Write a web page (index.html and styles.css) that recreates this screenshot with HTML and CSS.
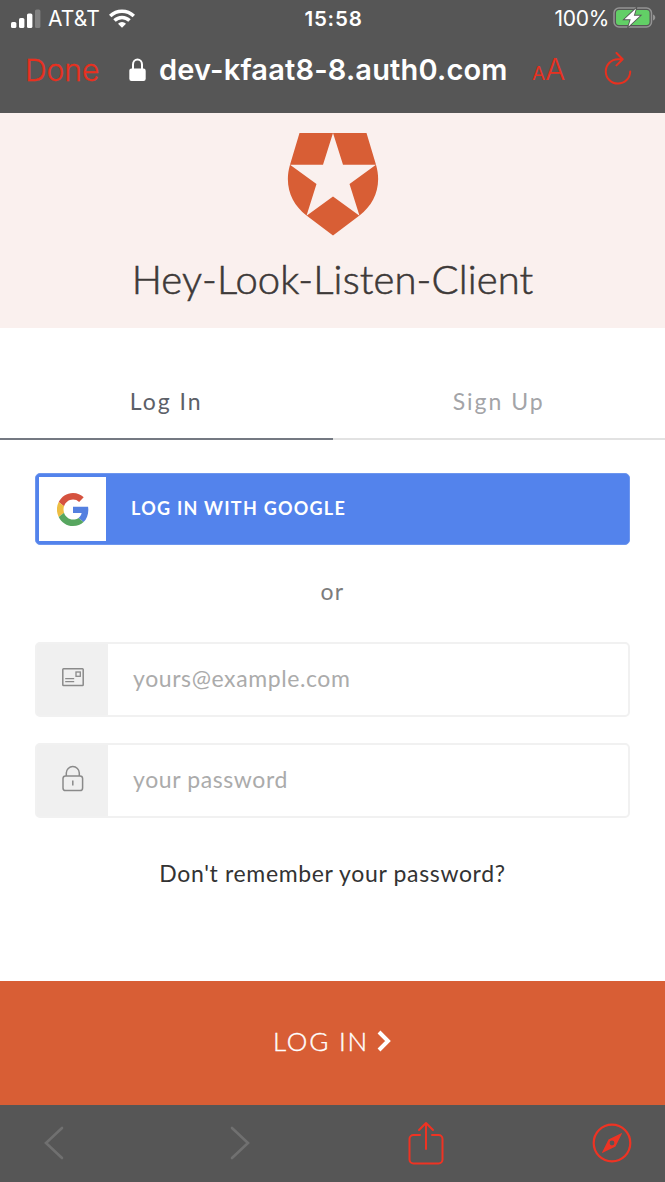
FILE: index.html
```
<!DOCTYPE html>
<html lang="en">
<head>
<meta charset="utf-8">
<title>Hey-Look-Listen-Client</title>
<link rel="stylesheet" href="styles.css">
</head>
<body>
<div class="screen">
  <div class="chrome">
    <div class="status">
      <div class="status-left">
        <svg class="signal" width="30" height="20" viewBox="0 0 30 20"><g fill="#fff"><rect x="0" y="13" width="5.4" height="6" rx="1.6"/><rect x="8" y="9" width="5.4" height="10" rx="1.6"/><rect x="16" y="4.500" width="5.400" height="14.500" rx="1.600"/><rect x="24" y="0.500" width="5.400" height="18.500" rx="1.600" opacity=".25"/></g></svg>
        <span class="carrier">AT&amp;T</span>
        <svg class="wifi" width="26" height="19" viewBox="0 0 26 19"><g fill="none" stroke="#fff" stroke-width="3.500"><path d="M1.200 7a17 17 0 0 1 23.600 0"/><path d="M5.500 11.500a10.800 10.800 0 0 1 15 0"/></g><path fill="#fff" d="M13 18.700l-4-4a5.800 5.800 0 0 1 8 0z"/></svg>
      </div>
      <span class="clock">15:58</span>
      <div class="status-right">
        <span class="percent">100%</span>
        <svg class="battery" width="43" height="22" viewBox="0 0 43 22"><rect x="1" y="1" width="37.500" height="19" rx="5" fill="none" stroke="#949494" stroke-width="1.500"/><rect x="3" y="3" width="33.500" height="15" rx="3" fill="#62cf66"/><path d="M40 7.500c3 1 3 5 0 6z" fill="#949494"/><path d="M23 1.500L11.500 12.300h6.200l-2.200 7.200L27 8.700h-6.200z" fill="#fff" stroke="#565656" stroke-width="1.800" paint-order="stroke"/></svg>
      </div>
    </div>
    <div class="address">
      <span class="done">Done</span>
      <svg class="padlock" width="17" height="24" viewBox="0 0 17 24"><path d="M4 11V6.500a4.500 5 0 0 1 9 0V11" fill="none" stroke="#fff" stroke-width="2"/><rect x="0.300" y="10.500" width="16.400" height="12.500" rx="2.200" fill="#fff"/></svg>
      <span class="url">dev-kfaat8-8.auth0.com</span>
      <span class="text-size"><span class="small-a">A</span><span class="big-a">A</span></span>
      <svg class="reload" width="30" height="34" viewBox="0 0 30 34"><path d="M19.500 7.200H15A12.200 12.200 0 1 0 27.200 19.500M13.500 1l6.200 6.200-6.200 6.200" fill="none" stroke="#e8301f" stroke-width="2" stroke-linecap="round" stroke-linejoin="round"/></svg>
    </div>
  </div>

  <header class="brand">
    <svg class="logo" width="92" height="104" viewBox="0 0 92 104"><path fill="#d85e35" d="M12.500 0H79.500L89 31.800C95 52 88 71 72.500 82.500L46 102.500 19.500 82.500C4 71-3 52 3 31.800z"/><path fill="#faf0ee" d="M46 0L56 31.800H89L62.500 51 72.500 82.800 46 63.500 19.500 82.800 29.500 51 3 31.800H36z"/></svg>
    <h1 class="title">Hey-Look-Listen-Client</h1>
  </header>

  <nav class="tabs">
    <span class="tab active">Log In</span>
    <span class="tab">Sign Up</span>
  </nav>

  <main class="form">
    <div class="google">
      <div class="google-icon"><svg width="32" height="33" viewBox="0 0 48 48" preserveAspectRatio="none"><path fill="#d5523f" d="M24 9.500c3.540 0 6.710 1.220 9.210 3.600l6.850-6.850C35.900 2.380 30.470 0 24 0 14.620 0 6.510 5.380 2.560 13.220l7.980 6.190C12.430 13.720 17.740 9.500 24 9.500z"/><path fill="#5480e0" d="M46.980 24.550c0-1.570-.15-3.090-.38-4.550H24v9.020h12.940c-.58 2.960-2.260 5.480-4.780 7.180l7.730 6c4.510-4.180 7.090-10.360 7.090-17.650z"/><path fill="#edbd42" d="M10.530 28.590A14.500 14.500 0 0 1 10.530 19.410l-7.980-6.190a24 24 0 0 0 0 21.560z"/><path fill="#57a660" d="M24 48c6.480 0 11.930-2.130 15.890-5.810l-7.730-6c-2.150 1.450-4.920 2.300-8.160 2.300-6.260 0-11.570-4.220-13.470-9.910l-7.980 6.190C6.510 42.620 14.620 48 24 48z"/></svg></div>
      <span class="google-label">LOG IN WITH GOOGLE</span>
    </div>
    <p class="or">or</p>
    <div class="field">
      <div class="field-icon"><svg class="mail" width="22" height="19" viewBox="0 0 22 19" fill="none" stroke="#8a8a8a"><rect x=".8" y=".8" width="20.400" height="16.800" rx=".8" stroke-width="1.500"/><rect x="14" y="4" width="4.300" height="4.300" stroke-width="1.300"/><path d="M3.200 10.700h9M3.200 13.700h9" stroke-width="1.300"/></svg></div>
      <span class="placeholder email">yours@example.com</span>
    </div>
    <div class="field">
      <div class="field-icon"><svg class="lock" width="22" height="27" viewBox="0 0 22 27" fill="none" stroke="#8a8a8a" stroke-width="1.500"><rect x="1" y="11" width="19.600" height="14.500" rx="2.600"/><path d="M4.300 11V8a6.500 6.500 0 0 1 13 0v3M10.800 15.500v5"/></svg></div>
      <span class="placeholder password">your password</span>
    </div>
    <p class="forgot">Don't remember your password?</p>
  </main>

  <div class="submit">
    <span class="submit-label">LOG IN</span>
    <svg class="chevron" width="14" height="22" viewBox="0 0 14 22"><path d="M2 2l9 9-9 9" fill="none" stroke="#fff" stroke-width="4"/></svg>
  </div>

  <div class="toolbar">
    <svg class="back" width="20" height="34" viewBox="0 0 20 34"><path d="M18 2L2 17l16 15" fill="none" stroke="#707070" stroke-width="2.600" stroke-linecap="round"/></svg>
    <svg class="forward" width="20" height="34" viewBox="0 0 20 34"><path d="M2 2l16 15L2 32" fill="none" stroke="#707070" stroke-width="2.600" stroke-linecap="round"/></svg>
    <svg class="share" width="36" height="44" viewBox="0 0 36 44"><path d="M12 14H5.500A4 4 0 0 0 1.500 18V38.500a4 4 0 0 0 4 4h25a4 4 0 0 0 4-4V18a4 4 0 0 0-4-4H24M18 28V2M11 9l7-7 7 7" fill="none" stroke="#ee3323" stroke-width="2" stroke-linecap="round" stroke-linejoin="round"/></svg>
    <svg class="compass" width="40" height="40" viewBox="0 0 40 40"><circle cx="20" cy="20" r="18.300" fill="none" stroke="#ee3323" stroke-width="2.200"/><path fill="#ee3323" fill-rule="evenodd" d="M30.300 9.700L23.500 23.500 9.700 30.300 16.500 16.500zM20 17.600a2.400 2.400 0 1 0 0 4.800 2.400 2.400 0 0 0 0-4.800z"/></svg>
  </div>
</div>
</body>
</html>
```

FILE: styles.css
```
* { box-sizing: border-box; }
body { margin: 0; background: #fff; font-family: Lato, "Liberation Sans", sans-serif; }
svg { display: block; flex: none; }
h1, p { margin: 0; }
span { white-space: nowrap; }
.screen { width: 665px; height: 1182px; display: flex; flex-direction: column; overflow: hidden; }

.chrome { height: 113px; flex: none; background: #565656; color: #fff; font-family: Inter, "Liberation Sans", sans-serif; }
.status { height: 37px; display: grid; grid-template-columns: 1fr auto 1fr; align-items: center; padding: 0 9px 0 11px; font-size: 21px; }
.status-left { display: flex; align-items: center; }
.carrier { margin-left: 7px; width: 52px; letter-spacing: 0.1px; }
.wifi { margin: -1px 0 0 9px; }
.clock { font-weight: 600; letter-spacing: 0.8px; font-size: 20.5px; }
.status-right { display: flex; align-items: center; justify-content: flex-end; margin-top: -1px; }
.percent { margin: 1px 4px 0 0; letter-spacing: -0.3px; }
.address { height: 66px; display: flex; align-items: center; padding-left: 25px; }
.done { width: 75px; color: #e8301f; font-size: 30px; font-weight: 300; -webkit-text-stroke: 0.3px #e8301f; }
.padlock { margin: -1px 0 0 29px; }
.url { width: 348px; margin: -2px 0 0 13px; font-size: 29px; font-weight: 600; letter-spacing: 0.17px; }
.text-size { display: flex; align-items: baseline; width: 34px; margin: -2px 0 0 25px; color: #e8301f; }
.small-a { font-size: 19px; }
.big-a { font-size: 30px; font-weight: 300; }
.reload { margin: -2px 0 0 37px; }

.brand { height: 215px; flex: none; background: #faf0ee; display: flex; flex-direction: column; align-items: center; padding: 20px 0 0 0; }
.title { margin-top: 17px; color: #3d3938; font-size: 40px; line-height: 50px; font-weight: 300; letter-spacing: 0.12px; white-space: nowrap; -webkit-text-stroke: 0.6px #3d3938; }

.tabs { height: 112px; flex: none; display: flex; }
.tab { flex: 1; padding-top: 58px; text-align: center; font-size: 23px; line-height: 30px; letter-spacing: 2px; color: #a3a4a8; border-bottom: 2px solid #e2e2e2; }
.tab.active { color: #5c6068; border-color: #747982; }

.form { height: 541px; flex: none; padding: 33px 35px 0 35px; }
.google { display: flex; align-items: center; height: 72px; padding: 3px; background: #5383ec; border: 1px solid #6d96ee; border-radius: 5px; }
.google-icon { width: 67px; height: 64px; background: #fff; display: flex; align-items: center; justify-content: center; }
.google-label { margin: -2px 0 0 25px; color: #fff; font-size: 18px; font-weight: 700; letter-spacing: 1.25px; }
.or { margin-top: 31px; text-align: center; font-size: 23px; line-height: 30px; color: #7c7c7c; letter-spacing: 1.3px; }
.field { display: flex; height: 75px; margin-top: 36px; border: 2px solid #f1f1f1; border-radius: 5px; align-items: center; }
.field + .field { margin-top: 26px; }
.field-icon { width: 71px; height: 71px; background: #f0f0f0; display: flex; align-items: center; justify-content: center; }
.mail { margin-top: -4px; }
.lock { margin-top: -4px; }
.placeholder { margin: -4px 0 0 25px; color: #ababab; font-size: 23px; letter-spacing: 0.6px; }
.forgot { margin-top: 40px; text-align: center; font-size: 23px; line-height: 30px; color: #333; letter-spacing: 0.65px; }

.submit { height: 124px; flex: none; display: flex; align-items: center; justify-content: center; padding: 0 1px 4px 0; background: #d85e35; color: #fff; }
.submit-label { font-size: 26px; font-weight: 300; letter-spacing: 1.8px; -webkit-text-stroke: 0.4px #fff; }
.chevron { margin-left: 8px; }
.toolbar { height: 77px; flex: none; display: flex; align-items: center; padding-bottom: 1px; background: #565656; }
.back { margin-left: 44px; }
.forward { margin-left: 166px; }
.share { margin-left: 158px; }
.compass { margin-left: 148px; }
```
